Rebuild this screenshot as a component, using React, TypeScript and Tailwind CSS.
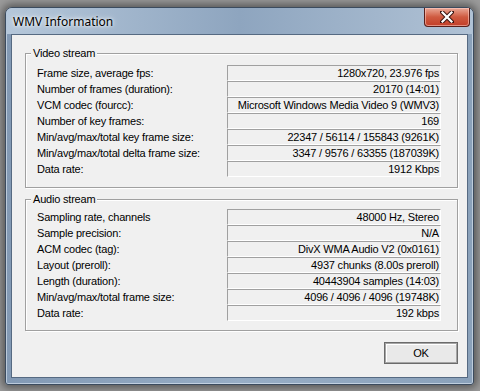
const VIDEO_ROWS: [string, string][] = [
  ['Frame size, average fps:', '1280x720, 23.976 fps'],
  ['Number of frames (duration):', '20170 (14:01)'],
  ['VCM codec (fourcc):', 'Microsoft Windows Media Video 9 (WMV3)'],
  ['Number of key frames:', '169'],
  ['Min/avg/max/total key frame size:', '22347 / 56114 / 155843 (9261K)'],
  ['Min/avg/max/total delta frame size:', '3347 / 9576 / 63355 (187039K)'],
  ['Data rate:', '1912 Kbps'],
];

const AUDIO_ROWS: [string, string][] = [
  ['Sampling rate, channels', '48000 Hz, Stereo'],
  ['Sample precision:', 'N/A'],
  ['ACM codec (tag):', 'DivX WMA Audio V2 (0x0161)'],
  ['Layout (preroll):', '4937 chunks (8.00s preroll)'],
  ['Length (duration):', '40443904 samples (14:03)'],
  ['Min/avg/max/total frame size:', '4096 / 4096 / 4096 (19748K)'],
  ['Data rate:', '192 kbps'],
];

function InfoRow({ label, value }: { label: string; value: string }) {
  return (
    <div className="flex h-[16px] items-center">
      <div className="w-[190px] pl-[11px] whitespace-nowrap">{label}</div>
      <div className="ml-auto mr-[16px] flex h-[16px] w-[214px] items-center justify-end overflow-hidden border border-t-[#a0a0a0] border-l-[#a0a0a0] border-b-white border-r-white pr-[1px] whitespace-nowrap">
        {value}
      </div>
    </div>
  );
}

function GroupBox({
  title,
  rows,
  className,
}: {
  title: string;
  rows: [string, string][];
  className: string;
}) {
  return (
    <div
      className={`relative ml-[13px] w-[433px] border border-[#a0a0a0] shadow-[1px_1px_0_#ffffff,inset_1px_1px_0_#ffffff] ${className}`}
    >
      <div className="absolute -top-[8px] left-[5px] bg-[#f0f0f0] px-[2px] leading-[14px]">{title}</div>
      <div className="flex flex-col">
        {rows.map(([l, v]) => (
          <InfoRow key={l} label={l} value={v} />
        ))}
      </div>
    </div>
  );
}

function CloseButton() {
  return (
    <div className="flex h-[19px] w-[46px] items-center justify-center rounded-b-[4px] border border-t-0 border-[#5a1f1a] bg-gradient-to-b from-[#e9a796] via-[#cf5a40] to-[#c23e28] shadow-[inset_0_0_0_1px_rgba(255,210,200,0.55)]">
      <svg width="14" height="12" viewBox="0 0 14 12">
        <path d="M2 1 L12 11 M12 1 L2 11" stroke="#3a1410" strokeWidth="4.2" strokeLinecap="square" />
        <path d="M2.5 1.5 L11.5 10.5 M11.5 1.5 L2.5 10.5" stroke="#ffffff" strokeWidth="2.2" strokeLinecap="square" />
      </svg>
    </div>
  );
}

export default function App() {
  return (
    <div className="h-[391px] w-[480px] overflow-hidden bg-[#9c9c9c] pl-[5px] pt-[7px] font-['Liberation_Sans',Arial,sans-serif] text-[11px] tracking-[-0.2px] text-black">
      <div className="flex h-[378px] w-[469px] flex-col rounded-t-[7px] rounded-b-[3px] border border-[#3b4b5e] bg-gradient-to-r from-[#8299b4] via-[#97adc5] to-[#8aa1ba] shadow-[0_0_9px_3px_rgba(0,0,0,0.45),inset_0_0_0_1px_rgba(225,235,245,0.6)]">
        <div className="flex h-[26px] items-start justify-between rounded-t-[6px] bg-gradient-to-r from-[#b5c7da] via-[#8ea5bf] to-[#b0c2d5] pl-[7px] pr-[3px]">
          <div className="mt-[6px] font-['Noto_Sans',sans-serif] text-[12px] leading-[16px] tracking-normal text-black [text-shadow:0_0_6px_#ffffff,0_0_3px_#ffffff]">
            WMV Information
          </div>
          <CloseButton />
        </div>
        <div className="mx-[5px] mb-[6px] flex flex-1 flex-col border border-[#566a82] bg-[#f0f0f0]">
          <GroupBox title="Video stream" rows={VIDEO_ROWS} className="mt-[18px] pt-[11px] pb-[10px]" />
          <GroupBox title="Audio stream" rows={AUDIO_ROWS} className="mt-[11px] pt-[9px] pb-[9px]" />
          <div className="mr-[9px] mt-[11px] flex justify-end">
            <button className="h-[22px] w-[74px] border border-[#6b6b6b] bg-[#e9e9e9] font-['Liberation_Sans',Arial,sans-serif] text-[11px] text-black shadow-[inset_0_0_0_1px_#a5a5a5,inset_2px_2px_0_#ffffff]">
              OK
            </button>
          </div>
        </div>
      </div>
    </div>
  );
}
